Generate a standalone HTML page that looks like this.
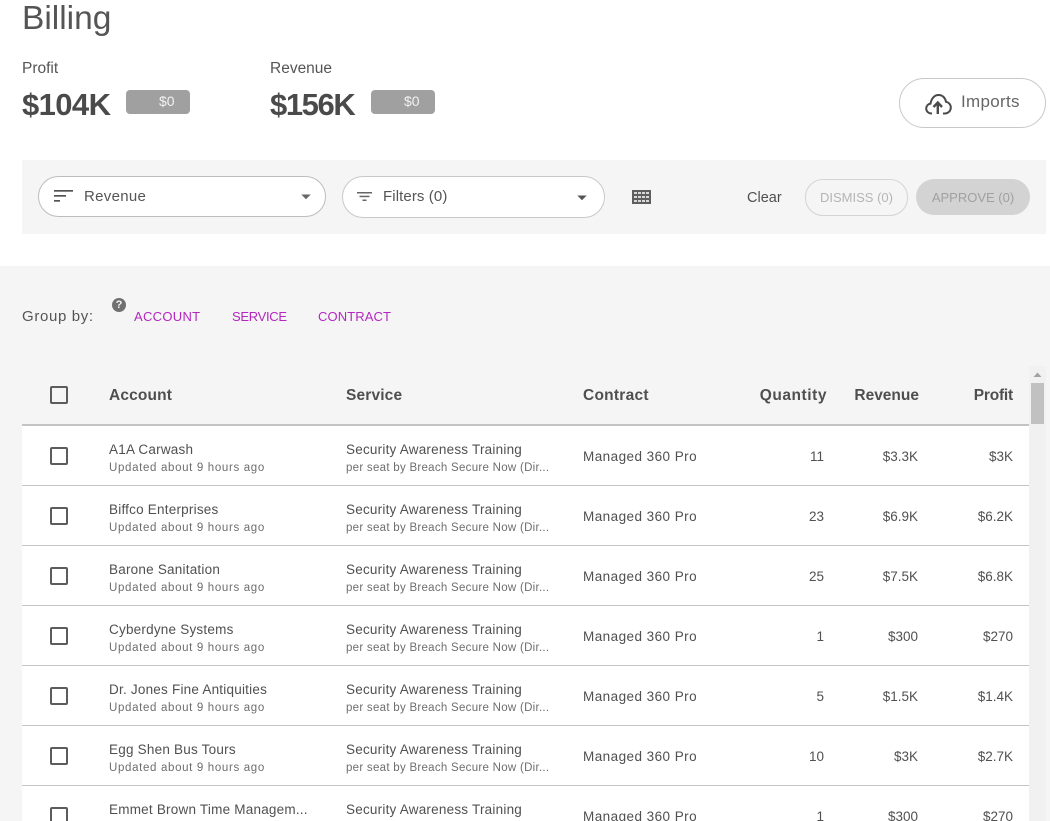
<!DOCTYPE html>
<html><head><meta charset="utf-8"><title>Billing</title>
<style>
html,body{margin:0;padding:0;background:#fff}
#p{position:relative;width:1050px;height:821px;overflow:hidden;background:#fff;font-family:"Liberation Sans",sans-serif;color:#4f4f4f}
#p div,#p span.a{position:absolute;white-space:nowrap}
.box{width:14px;height:14px;border:2px solid #5c5c5c;border-radius:2px;background:transparent}
.row{left:22px;width:1007px;height:59px;background:#fff;border-bottom:1px solid #c4c4c4}
.t{font-size:13.5px;line-height:16px;color:#505050;letter-spacing:.22px;margin-top:1px}
.m{letter-spacing:.45px}
.n{letter-spacing:0}
.s{font-size:11.5px;line-height:14px;color:#6e6e6e;letter-spacing:.66px;margin-top:1px}
.u{letter-spacing:.28px}
.h{font-size:15.5px;line-height:18px;font-weight:bold;color:#4f4f4f;top:387px}
.r{text-align:right}
.q{width:80px;left:744px}.v{width:80px;left:838px}.f{width:80px;left:933px}
.g{font-size:13px;line-height:16px;color:#b327c0;top:309px}
.pill{background:#a0a0a0;border-radius:4px;height:24px;width:64px;top:90px;color:#f2f2f2;font-size:14px;line-height:23px}
</style></head><body><div id="p">
<div style="left:22px;top:-2px;font-size:33.5px;line-height:42px;color:#555">Billing</div>
<div style="left:22px;top:60px;font-size:15.5px;line-height:18px;color:#555">Profit</div>
<div style="left:270px;top:60px;font-size:15.5px;line-height:18px;color:#555">Revenue</div>
<div style="left:22px;top:86px;font-size:31px;line-height:38px;font-weight:bold;color:#4a4a4a;letter-spacing:-.6px">$104K</div>
<div style="left:270px;top:86px;font-size:31px;line-height:38px;font-weight:bold;color:#4a4a4a;letter-spacing:-1.4px">$156K</div>
<div class="pill" style="left:126px"><span class="a" style="left:33px">$0</span></div>
<div class="pill" style="left:371px"><span class="a" style="left:33px">$0</span></div>

<div style="left:899px;top:78px;width:145px;height:48px;border:1px solid #c8c8c8;border-radius:25px;background:#fff"></div>
<svg style="position:absolute;left:925px;top:93px" width="27" height="22" viewBox="0 0 27 22" fill="none" stroke="#4a4a4a" stroke-width="2"><path d="M7 20.5H6.500C3.500 20.500 1.200 18.300 1.200 15.500C1.200 13 3 11 5.500 10.600C6.300 5.500 9.500 2 13.500 2C17.500 2 20.300 4.800 21 8.800C23.800 9.300 25.800 11.600 25.800 14.500C25.800 17.800 23.300 20.500 20 20.500H18"/><path d="M12.800 21V10M8.500 14L12.800 9.500L17 14" stroke-width="2.400"/></svg>
<div style="left:961px;top:92px;font-size:17px;line-height:20px;color:#666;letter-spacing:.3px">Imports</div>

<div style="left:22px;top:160px;width:1024px;height:74px;background:#f5f5f5"></div>
<div style="left:38px;top:176px;width:286px;height:39px;border:1px solid #bdbdbd;border-radius:21px;background:#fff"></div>
<svg style="position:absolute;left:54px;top:190px" width="20" height="14" fill="#555"><rect width="19" height="1.700" y="0"/><rect width="12" height="1.700" y="5"/><rect width="6" height="1.700" y="10"/></svg>
<div style="left:84px;top:188px;font-size:15px;line-height:18px;color:#555;letter-spacing:.3px">Revenue</div>
<svg style="position:absolute;left:301px;top:194px" width="10" height="6" fill="#666"><path d="M0.300 0.500H9.700L5 5.300z"/></svg>

<div style="left:342px;top:176px;width:261px;height:40px;border:1px solid #c9c9c9;border-radius:21px;background:#fff"></div>
<svg style="position:absolute;left:356px;top:192px" width="18" height="11" fill="#666"><rect x="1" width="15" height="1.500" y="0"/><rect x="3.500" width="10" height="1.500" y="3.700"/><rect x="6.500" width="4" height="1.500" y="7.500"/></svg>
<div style="left:383px;top:188px;font-size:15px;line-height:18px;color:#555;letter-spacing:.1px">Filters (0)</div>
<svg style="position:absolute;left:577px;top:195px" width="10" height="6" fill="#555"><path d="M0.300 0.500H9.700L5 5.300z"/></svg>

<svg style="position:absolute;left:632px;top:190px" width="19" height="15"><rect width="19" height="14" fill="#5e5e5e"/><g fill="#d8d8d8"><rect x="2" y="2" width="3" height="2"/><rect x="6" y="2" width="3" height="2"/><rect x="10" y="2" width="3" height="2"/><rect x="14" y="2" width="3" height="2"/><rect x="2" y="6" width="3" height="2"/><rect x="6" y="6" width="3" height="2"/><rect x="10" y="6" width="3" height="2"/><rect x="14" y="6" width="3" height="2"/><rect x="2" y="10" width="3" height="2"/><rect x="6" y="10" width="3" height="2"/><rect x="10" y="10" width="3" height="2"/><rect x="14" y="10" width="3" height="2"/></g></svg>
<div style="left:747px;top:190px;font-size:14.500px;line-height:17px;color:#4f4f4f">Clear</div>
<div style="left:805px;top:179px;width:101px;height:35px;border:1px solid #d4d4d4;border-radius:18px;text-align:center;font-size:13px;line-height:35px;color:#b5b5b5">DISMISS (0)</div>
<div style="left:916px;top:179px;width:114px;height:36px;background:#d3d3d3;border-radius:18px;text-align:center;font-size:13px;line-height:37px;color:#a0a0a0">APPROVE (0)</div>

<div style="left:0;top:266px;width:1050px;height:555px;background:#f5f5f5"></div>
<div style="left:22px;top:308px;font-size:15px;line-height:18px;color:#555;letter-spacing:.65px">Group by:</div>
<div style="left:112px;top:298px;width:14px;height:14px;border-radius:50%;background:#707070;color:#f5f5f5;font-size:11px;line-height:14px;font-weight:bold;text-align:center">?</div>
<div class="g" style="left:134px;letter-spacing:.3px">ACCOUNT</div>
<div class="g" style="left:232px;letter-spacing:-.3px">SERVICE</div>
<div class="g" style="left:318px;letter-spacing:.1px">CONTRACT</div>

<div class="box" style="left:50px;top:386px"></div>
<div class="h" style="left:109px;letter-spacing:.15px">Account</div>
<div class="h" style="left:346px;letter-spacing:.15px">Service</div>
<div class="h" style="left:583px;letter-spacing:.25px">Contract</div>
<div class="h r" style="left:727px;width:100px;letter-spacing:.55px">Quantity</div>
<div class="h r" style="left:819px;width:100px">Revenue</div>
<div class="h r" style="left:913px;width:100px;letter-spacing:-.2px">Profit</div>
<div style="left:22px;top:424px;width:1007px;height:2px;background:#c4c4c4"></div>

<div class="row" style="top:426px"></div>
<div class="box" style="left:50px;top:447px"></div>
<div class="t" style="left:109px;top:441px">A1A Carwash</div>
<div class="s" style="left:109px;top:460px">Updated about 9 hours ago</div>
<div class="t" style="left:346px;top:441px">Security Awareness Training</div>
<div class="s u" style="left:346px;top:460px">per seat by Breach Secure Now (Dir...</div>
<div class="t m" style="left:583px;top:448px">Managed 360 Pro</div>
<div class="t r q n" style="top:448px">11</div><div class="t r v n" style="top:448px">$3.3K</div><div class="t r f n" style="top:448px">$3K</div>

<div class="row" style="top:486px"></div>
<div class="box" style="left:50px;top:507px"></div>
<div class="t" style="left:109px;top:501px">Biffco Enterprises</div>
<div class="s" style="left:109px;top:520px">Updated about 9 hours ago</div>
<div class="t" style="left:346px;top:501px">Security Awareness Training</div>
<div class="s u" style="left:346px;top:520px">per seat by Breach Secure Now (Dir...</div>
<div class="t m" style="left:583px;top:508px">Managed 360 Pro</div>
<div class="t r q n" style="top:508px">23</div><div class="t r v n" style="top:508px">$6.9K</div><div class="t r f n" style="top:508px">$6.2K</div>

<div class="row" style="top:546px"></div>
<div class="box" style="left:50px;top:567px"></div>
<div class="t" style="left:109px;top:561px">Barone Sanitation</div>
<div class="s" style="left:109px;top:580px">Updated about 9 hours ago</div>
<div class="t" style="left:346px;top:561px">Security Awareness Training</div>
<div class="s u" style="left:346px;top:580px">per seat by Breach Secure Now (Dir...</div>
<div class="t m" style="left:583px;top:568px">Managed 360 Pro</div>
<div class="t r q n" style="top:568px">25</div><div class="t r v n" style="top:568px">$7.5K</div><div class="t r f n" style="top:568px">$6.8K</div>

<div class="row" style="top:606px"></div>
<div class="box" style="left:50px;top:627px"></div>
<div class="t" style="left:109px;top:621px">Cyberdyne Systems</div>
<div class="s" style="left:109px;top:640px">Updated about 9 hours ago</div>
<div class="t" style="left:346px;top:621px">Security Awareness Training</div>
<div class="s u" style="left:346px;top:640px">per seat by Breach Secure Now (Dir...</div>
<div class="t m" style="left:583px;top:628px">Managed 360 Pro</div>
<div class="t r q n" style="top:628px">1</div><div class="t r v n" style="top:628px">$300</div><div class="t r f n" style="top:628px">$270</div>

<div class="row" style="top:666px"></div>
<div class="box" style="left:50px;top:687px"></div>
<div class="t" style="left:109px;top:681px">Dr. Jones Fine Antiquities</div>
<div class="s" style="left:109px;top:700px">Updated about 9 hours ago</div>
<div class="t" style="left:346px;top:681px">Security Awareness Training</div>
<div class="s u" style="left:346px;top:700px">per seat by Breach Secure Now (Dir...</div>
<div class="t m" style="left:583px;top:688px">Managed 360 Pro</div>
<div class="t r q n" style="top:688px">5</div><div class="t r v n" style="top:688px">$1.5K</div><div class="t r f n" style="top:688px">$1.4K</div>

<div class="row" style="top:726px"></div>
<div class="box" style="left:50px;top:747px"></div>
<div class="t" style="left:109px;top:741px">Egg Shen Bus Tours</div>
<div class="s" style="left:109px;top:760px">Updated about 9 hours ago</div>
<div class="t" style="left:346px;top:741px">Security Awareness Training</div>
<div class="s u" style="left:346px;top:760px">per seat by Breach Secure Now (Dir...</div>
<div class="t m" style="left:583px;top:748px">Managed 360 Pro</div>
<div class="t r q n" style="top:748px">10</div><div class="t r v n" style="top:748px">$3K</div><div class="t r f n" style="top:748px">$2.7K</div>

<div class="row" style="top:786px"></div>
<div class="box" style="left:50px;top:807px"></div>
<div class="t" style="left:109px;top:801px">Emmet Brown Time Managem...</div>
<div class="t" style="left:346px;top:801px">Security Awareness Training</div>
<div class="t m" style="left:583px;top:808px">Managed 360 Pro</div>
<div class="t r q n" style="top:808px">1</div><div class="t r v n" style="top:808px">$300</div><div class="t r f n" style="top:808px">$270</div>

<div style="left:1029px;top:366px;width:17px;height:455px;background:#f1f1f1"></div>
<svg style="position:absolute;left:1033px;top:372px" width="9" height="6" fill="#a3a3a3"><path d="M0.500 5L4.500 0.500L8.500 5z"/></svg>
<div style="left:1031px;top:383px;width:13px;height:41px;background:#c1c1c1"></div>
</div></body></html>
